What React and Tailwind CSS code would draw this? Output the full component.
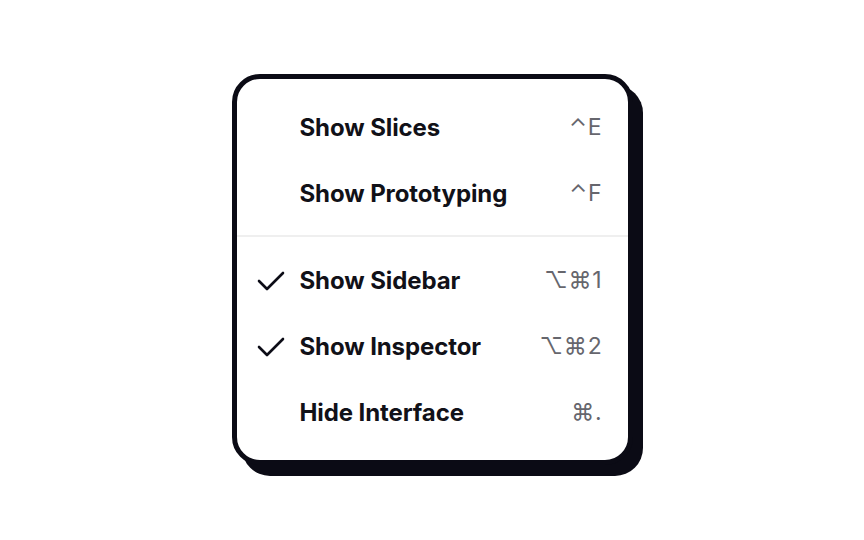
import React from "react";

function Check() {
  return (
    <svg width="28" height="22" viewBox="0 0 28 22" fill="none">
      <polyline
        points="2,11 10,19 26,3"
        stroke="#0c0c16"
        strokeWidth="2.6"
        strokeLinecap="round"
        strokeLinejoin="round"
      />
    </svg>
  );
}

function Row({ label, shortcut, checked }) {
  return (
    <div className="flex h-[66px] items-center">
      <div className="flex w-[63px] shrink-0 items-center pl-[20px]">
        {checked ? <Check /> : null}
      </div>
      <div className="flex-1 text-[24px] font-bold text-[#111118] tracking-[-0.1px]">
        {label}
      </div>
      <div className="pr-[25px] text-[23px] tracking-[0.8px] text-[#66666d]">
        {shortcut}
      </div>
    </div>
  );
}

export default function App() {
  return (
    <div
      className="flex h-[540px] w-[864px] items-center justify-center bg-white pb-[2px]"
      style={{ fontFamily: "Inter, 'DejaVu Sans', sans-serif" }}
    >
      <div className="w-[401px] rounded-[28px] border-[5px] border-[#0b0b15] bg-white shadow-[10px_11px_0_0_#0b0b15]">
        <div className="pt-[16px]">
          <Row label="Show Slices" shortcut="⌃E" />
          <Row label="Show Prototyping" shortcut="⌃F" />
        </div>
        <div className="mt-[8px] h-[2px] bg-[#efefef]" />
        <div className="pt-[11px] pb-[14px]">
          <Row label="Show Sidebar" shortcut="⌥⌘1" checked />
          <Row label="Show Inspector" shortcut="⌥⌘2" checked />
          <Row label="Hide Interface" shortcut="⌘." />
        </div>
      </div>
    </div>
  );
}
